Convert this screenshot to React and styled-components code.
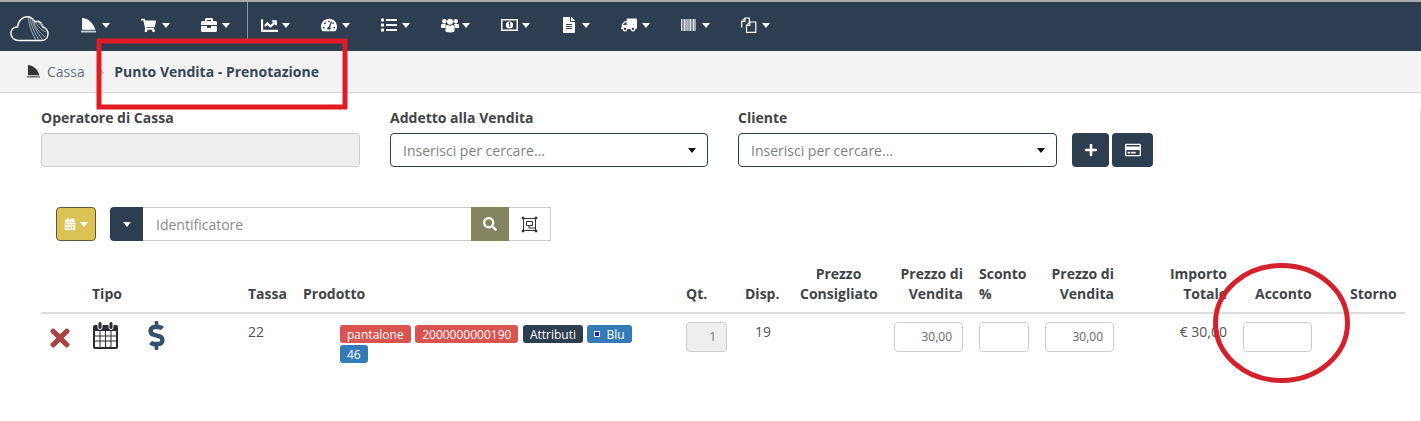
import React from 'react';
import styled, { createGlobalStyle } from 'styled-components';
import {
  FaShoppingCart, FaBriefcase, FaChartLine, FaTachometerAlt, FaList,
  FaFileAlt, FaTruck, FaCalendarAlt, FaSearch,
  FaPlus, FaRegCreditCard, FaTimes, FaDollarSign,
} from 'react-icons/fa';

const NAVY = '#2c3e50';
const HEADER_COLUMNS = '51px 156px 55px 383px 59px 55px 94px 85px 66px 85px 113px 107px 55px';

const GlobalStyle = createGlobalStyle`
  html, body { margin: 0; padding: 0; background: #fff; overflow: hidden; }
  body { font-family: "Open Sans", "Liberation Sans", sans-serif; font-size: 14px; color: #333; }
  * { box-sizing: border-box; }
`;

const Page = styled.div`
  position: relative;
  width: 1421px;
  height: 421px;
  overflow: hidden;
`;

const TopBar = styled.nav`
  height: 51px;
  background: ${NAVY};
  border-top: 2px solid #a9a9a9;
  display: flex;
  align-items: center;
  padding: 0 0 3px 10px;
`;

const Logo = styled.svg`
  width: 39px;
  height: 26px;
  margin-right: 32px;
  margin-top: 7px;
  flex: none;
`;

const NavItem = styled.div`
  position: relative;
  width: 60px;
  flex: none;
  display: flex;
  align-items: center;
  color: #fff;
  font-size: 16px;
  ${p => p.$divided && `
    &::after {
      content: '';
      position: absolute;
      left: 46px;
      top: -15px;
      width: 1px;
      height: 41px;
      background: #8d99a6;
    }
  `}
`;

const NavIcon = styled.span`
  width: 21px;
  display: flex;
  align-items: center;
`;

const Caret = styled.span`
  display: inline-block;
  width: 0;
  height: 0;
  border-left: 4.5px solid transparent;
  border-right: 4.5px solid transparent;
  border-top: 5px solid ${p => p.$color || '#fff'};
`;

const FlippedTruck = styled(FaTruck)`
  transform: scaleX(-1);
`;

const Crumbs = styled.div`
  height: 42px;
  background: #f3f3f3;
  border-bottom: 1px solid #d6d6d6;
  display: flex;
  align-items: center;
  padding-left: 27px;
  font-size: 14px;
`;

const SailIcon = styled.svg`
  width: ${p => p.$size}px;
  height: ${p => p.$size}px;
  color: ${p => p.$color};
`;

const CrumbLink = styled.span`
  color: #66717d;
  margin-left: 7px;
`;

const CrumbSep = styled.span`
  color: #777;
  font-size: 8px;
  margin: 0 10px 0 15px;
`;

const CrumbCurrent = styled.span`
  color: #34465a;
  font-weight: 700;
`;

const FormRow = styled.div`
  display: flex;
  align-items: flex-end;
  padding: 15px 0 0 41px;
`;

const Field = styled.div`
  width: ${p => p.$width}px;
  margin-right: 30px;
`;

const FieldLabel = styled.div`
  font-weight: 700;
  color: #3f4448;
  line-height: 20px;
  margin-bottom: 5px;
`;

const DisabledBox = styled.div`
  height: 34px;
  background: #eee;
  border: 1px solid #ccc;
  border-radius: 4px;
`;

const SelectBox = styled.div`
  height: 34px;
  border: 1px solid ${NAVY};
  border-radius: 4px;
  display: flex;
  align-items: center;
  justify-content: space-between;
  padding: 0 11px 0 12px;
  color: #7f7f7f;
`;

const ActionGroup = styled.div`
  display: flex;
  gap: 3px;
  margin-left: -15px;
`;

const ActionButton = styled.button`
  height: 34px;
  width: ${p => p.$width}px;
  padding: 0;
  border: 0;
  border-radius: 4px;
  background: ${NAVY};
  color: #fff;
  font-size: 14px;
  display: flex;
  align-items: center;
  justify-content: center;
`;

const SearchRow = styled.div`
  display: flex;
  align-items: stretch;
  height: 34px;
  margin: 40px 0 0 56px;
`;

const YellowButton = styled.button`
  width: 40px;
  padding: 0;
  margin-right: 14px;
  background: #dcc356;
  border: 1px solid #5c5640;
  border-radius: 4px;
  color: #fff;
  font-size: 12px;
  display: flex;
  align-items: center;
  justify-content: center;
  gap: 4px;
`;

const DarkAddon = styled.div`
  width: 33px;
  background: ${NAVY};
  border-radius: 4px 0 0 4px;
  display: flex;
  align-items: center;
  justify-content: center;
`;

const SearchInput = styled.input`
  width: 328px;
  border: 1px solid #ccc;
  border-left: 0;
  border-right: 0;
  padding: 0 13px;
  font: 14px "Open Sans", sans-serif;
  outline: none;
  &::placeholder { color: #8a8a8a; opacity: 1; }
`;

const OliveButton = styled.button`
  width: 38px;
  padding: 0;
  border: 0;
  background: #83835f;
  color: #fff;
  font-size: 14px;
  display: flex;
  align-items: center;
  justify-content: center;
`;

const ScanButton = styled.button`
  width: 42px;
  padding: 0;
  border: 1px solid #ccc;
  border-left: 0;
  background: #fff;
  display: flex;
  align-items: center;
  justify-content: center;
`;

const Table = styled.div`
  margin: 23px 0 0 41px;
  width: 1364px;
`;

const HeaderRow = styled.div`
  display: grid;
  grid-template-columns: ${HEADER_COLUMNS};
  align-items: end;
  padding-bottom: 8px;
  border-bottom: 2px solid #ddd;
`;

const HeaderCell = styled.div`
  font-weight: 700;
  line-height: 20px;
  color: #3f4448;
  text-align: ${p => p.$align || 'left'};
  padding-right: ${p => p.$padRight || 0}px;
  padding-left: ${p => p.$padLeft || 0}px;
`;

const BodyRow = styled.div`
  display: grid;
  grid-template-columns: ${HEADER_COLUMNS};
  align-items: start;
  padding-top: 8px;
`;

const BodyCell = styled.div`
  line-height: 20px;
  color: #555;
  text-align: ${p => p.$align || 'left'};
  padding-right: ${p => p.$padRight || 0}px;
  padding-left: ${p => p.$padLeft || 0}px;
`;

const TipoIcons = styled.div`
  display: flex;
  align-items: flex-start;
`;

const DeleteIcon = styled(FaTimes)`
  color: #a94442;
  font-size: 28px;
  margin: 2px 0 0 5px;
  display: block;
`;

const CalendarIcon = styled.svg`
  width: 27px;
  height: 29px;
  margin-top: -1px;
  margin-right: 24px;
`;

const DollarIcon = styled(FaDollarSign)`
  color: #34506e;
  font-size: 29px;
  margin-top: -1px;
  margin-left: -1px;
`;

const Tags = styled.div`
  display: flex;
  flex-wrap: wrap;
  gap: 2px 4.5px;
  width: 300px;
  margin: 3px 0 0 37px;
`;

const Tag = styled.span`
  height: 18px;
  padding: 0 7px;
  border-radius: 3px;
  background: ${p => p.$bg};
  color: #fff;
  font-size: 12px;
  line-height: 17px;
  display: inline-flex;
  align-items: center;
`;

const Swatch = styled.span`
  width: 6px;
  height: 6px;
  background: #1a1ad0;
  border: 1px solid #fff;
  margin: 0 6px 0 0;
`;

const NumberBox = styled.div`
  width: ${p => p.$width}px;
  height: 30px;
  border: 1px solid #ccc;
  border-radius: 4px;
  background: ${p => (p.$disabled ? '#eee' : '#fff')};
  color: ${p => (p.$disabled ? '#777' : '#666')};
  font-size: 12px;
  line-height: 28px;
  text-align: right;
  padding-right: 10px;
`;

const Annotation = styled.svg`
  position: absolute;
  inset: 0;
  width: 1421px;
  height: 421px;
  pointer-events: none;
`;

const EdgeLine = styled.div`
  position: absolute;
  right: 0;
  top: 108px;
  bottom: 0;
  width: 1px;
  background: #e2e2e2;
`;

const SailGlyph = () => (
  <>
    <path d="M1 0 C6 0 11 4 13.500 11 L1 11 Z" fill="currentColor" />
    <path d="M0 12 Q7 11.500 14 12 V13.500 H0 Z" fill="currentColor" opacity="0.75" />
  </>
);

const UsersIcon = () => (
  <svg width="18" height="15" viewBox="0 0 18 15" fill="#fff">
    <circle cx="3.300" cy="3.200" r="2.300" />
    <circle cx="14.700" cy="3.200" r="2.300" />
    <circle cx="9" cy="3.800" r="3" />
    <path d="M0 6.500 Q3.300 5 5 6.500 L4 10 H0 Z" />
    <path d="M18 6.500 Q14.700 5 13 6.500 L14 10 H18 Z" />
    <path d="M4.500 9 Q5 7 6.500 7 Q9 8.500 11.500 7 Q13 7 13.500 9 L13.500 13.500 Q9 15.500 4.500 13.500 Z" />
  </svg>
);

const MoneyIcon = () => (
  <svg width="17" height="12" viewBox="0 0 17 12">
    <rect x="0" y="0" width="17" height="12" fill="#fff" />
    <rect x="1.500" y="1.500" width="14" height="9" fill={NAVY} />
    <circle cx="8.500" cy="6" r="3.600" fill="#fff" />
    <path d="M7.600 4.600 L8.800 3.900 V8.100" stroke={NAVY} strokeWidth="1.100" fill="none" />
  </svg>
);

const BarcodeIcon = () => (
  <svg width="16" height="12" viewBox="0 0 16 12">
    {[0, 1.5, 3, 4.500, 6, 7.500, 9, 10.500, 12, 13.500].map((x, i) => (
      <rect key={x} x={x} y="0" width="1" height="12" fill="#fff" opacity={i % 3 === 1 ? 0.55 : 0.85} />
    ))}
    <rect x="0" y="0" width="15" height="12" fill="#fff" opacity="0.2" />
  </svg>
);

const FilesIcon = () => (
  <svg width="16" height="16" viewBox="0 0 16 16" fill="none" stroke="#fff" strokeWidth="1.200">
    <path d="M0.700 10.500 V4.500 L4 1 H8.300 V5" />
    <path d="M0.700 4.500 H4 V1" />
    <path d="M5.500 15.300 V8.500 L8.800 5 H14.800 V15.300 Z" />
    <path d="M5.500 8.500 H8.800 V5" />
  </svg>
);

const ScanIcon = () => (
  <svg width="17" height="17" viewBox="0 0 17 17" fill="none" stroke="#333" strokeWidth="1">
    <rect x="2.500" y="2.500" width="12" height="12" />
    <path d="M5.500 5.500 H11.500 V9.500 H5.500 Z M8 9.500 V12 H14" />
    {[[1, 1], [14, 1], [1, 14], [14, 14]].map(([x, y]) => (
      <rect key={`${x}-${y}`} x={x} y={y} width="2" height="2" fill="#333" strokeWidth="0.5" />
    ))}
  </svg>
);

const NAV_ITEMS = [
  { icon: <SailIcon $size={15} $color="#fff" viewBox="0 0 14 14"><SailGlyph /></SailIcon> },
  { icon: <FaShoppingCart size={15} /> },
  { icon: <FaBriefcase size={16} />, divided: true },
  { icon: <FaChartLine size={17} /> },
  { icon: <FaTachometerAlt size={16} /> },
  { icon: <FaList size={16} /> },
  { icon: <UsersIcon /> },
  { icon: <MoneyIcon /> },
  { icon: <FaFileAlt size={16} /> },
  { icon: <FlippedTruck size={16} /> },
  { icon: <BarcodeIcon /> },
  { icon: <FilesIcon /> },
];

export default function App() {
  return (
    <Page>
      <GlobalStyle />
      <TopBar>
        <Logo viewBox="0 0 39 26" fill="none" stroke="#fff" strokeWidth="1.4">
          <path d="M9 24.500 C3 24.500 0.700 20 0.900 17 C1 13 4.500 10.500 7.500 11 C8 5 12 0.800 17 0.800 C20 0.800 23 2 25 6 C28 4 32 6 33 11 C36 12 38.200 15 38 18 C37.800 22 35 24.500 31 24.500 Z" />
          <path d="M18 1 C19 9 22 18 26 24 M20 1.500 C21 9 24 16 29 24 M22 3 C23 10 27 16 32 23 M24 6 C25 11 29 16 35 21 M26 6 C27 10 30 13 36 16 M28 5.500 C29 8 31 10 34 12" strokeWidth="0.7" stroke="#d5dade" />
        </Logo>
        {NAV_ITEMS.map((item, i) => (
          <NavItem key={i} $divided={item.divided}>
            <NavIcon>{item.icon}</NavIcon>
            <Caret />
          </NavItem>
        ))}
      </TopBar>

      <Crumbs>
        <SailIcon $size={13} $color="#333" viewBox="0 0 14 14"><SailGlyph /></SailIcon>
        <CrumbLink>Cassa</CrumbLink>
        <CrumbSep>&gt;</CrumbSep>
        <CrumbCurrent>Punto Vendita - Prenotazione</CrumbCurrent>
      </Crumbs>

      <FormRow>
        <Field $width={319}>
          <FieldLabel>Operatore di Cassa</FieldLabel>
          <DisabledBox />
        </Field>
        <Field $width={318}>
          <FieldLabel>Addetto alla Vendita</FieldLabel>
          <SelectBox>Inserisci per cercare...<Caret $color="#111" /></SelectBox>
        </Field>
        <Field $width={319}>
          <FieldLabel>Cliente</FieldLabel>
          <SelectBox>Inserisci per cercare...<Caret $color="#111" /></SelectBox>
        </Field>
        <ActionGroup>
          <ActionButton $width={37}><FaPlus /></ActionButton>
          <ActionButton $width={41}><FaRegCreditCard size={16} /></ActionButton>
        </ActionGroup>
      </FormRow>

      <SearchRow>
        <YellowButton><FaCalendarAlt /><Caret /></YellowButton>
        <DarkAddon><Caret /></DarkAddon>
        <SearchInput placeholder="Identificatore" readOnly />
        <OliveButton><FaSearch /></OliveButton>
        <ScanButton><ScanIcon /></ScanButton>
      </SearchRow>

      <Table>
        <HeaderRow>
          <HeaderCell />
          <HeaderCell>Tipo</HeaderCell>
          <HeaderCell>Tassa</HeaderCell>
          <HeaderCell>Prodotto</HeaderCell>
          <HeaderCell>Qt.</HeaderCell>
          <HeaderCell>Disp.</HeaderCell>
          <HeaderCell $align="center" $padRight={17}>Prezzo<br />Consigliato</HeaderCell>
          <HeaderCell $align="right" $padRight={16}>Prezzo di<br />Vendita</HeaderCell>
          <HeaderCell>Sconto<br />%</HeaderCell>
          <HeaderCell $align="right" $padRight={16}>Prezzo di<br />Vendita</HeaderCell>
          <HeaderCell $align="right" $padRight={16}>Importo<br />Totale</HeaderCell>
          <HeaderCell $padLeft={12}>Acconto</HeaderCell>
          <HeaderCell>Storno</HeaderCell>
        </HeaderRow>
        <BodyRow>
          <BodyCell><DeleteIcon /></BodyCell>
          <BodyCell>
            <TipoIcons>
              <CalendarIcon viewBox="0 0 27 29">
                <rect x="1" y="4" width="25" height="24" rx="2" fill="#2b2b33" />
                <rect x="3" y="10" width="21" height="16" fill="#fff" />
                <path d="M3 15 H24 M3 20 H24 M8 10 V26 M13.500 10 V26 M19 10 V26" stroke="#2b2b33" strokeWidth="1" />
                <rect x="6" y="0.500" width="4" height="8" rx="2" fill="#2b2b33" stroke="#fff" strokeWidth="1" />
                <rect x="17" y="0.500" width="4" height="8" rx="2" fill="#2b2b33" stroke="#fff" strokeWidth="1" />
              </CalendarIcon>
              <DollarIcon />
            </TipoIcons>
          </BodyCell>
          <BodyCell>22</BodyCell>
          <BodyCell>
            <Tags>
              <Tag $bg="#d9534f">pantalone</Tag>
              <Tag $bg="#d9534f">2000000000190</Tag>
              <Tag $bg={NAVY}>Attributi</Tag>
              <Tag $bg="#337ab7"><Swatch />Blu</Tag>
              <Tag $bg="#337ab7">46</Tag>
            </Tags>
          </BodyCell>
          <BodyCell><NumberBox $width={41} $disabled>1</NumberBox></BodyCell>
          <BodyCell $padLeft={10}>19</BodyCell>
          <BodyCell />
          <BodyCell><NumberBox $width={69}>30,00</NumberBox></BodyCell>
          <BodyCell><NumberBox $width={50} /></BodyCell>
          <BodyCell><NumberBox $width={69}>30,00</NumberBox></BodyCell>
          <BodyCell $align="right" $padRight={16}>€ 30,00</BodyCell>
          <BodyCell><NumberBox $width={69} /></BodyCell>
          <BodyCell />
        </BodyRow>
      </Table>

      <EdgeLine />
      <Annotation viewBox="0 0 1421 421" fill="none">
        <rect x="99" y="41" width="246" height="66" stroke="#e01b24" strokeWidth="5" />
        <ellipse cx="1281.500" cy="323" rx="66" ry="57.500" stroke="#d3222c" strokeWidth="5" />
      </Annotation>
    </Page>
  );
}
